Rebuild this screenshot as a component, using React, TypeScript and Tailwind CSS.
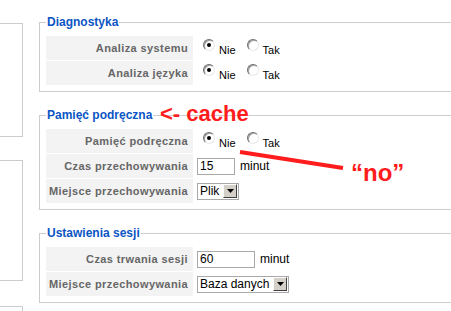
import React from 'react';

type Row = { label: string; kind: 'radio' | 'input' | 'select'; value?: string; inputW?: number };

const Radio: React.FC<{ checked?: boolean }> = ({ checked }) => (
  <span className="relative inline-block w-[12px] h-[12px] rounded-full border border-t-[#6f6f6f] border-l-[#6f6f6f] border-r-[#e8e8e8] border-b-[#e8e8e8] bg-white shadow-[inset_1px_1px_0_#a0a0a0]">
    {checked && <span className="absolute left-[3px] top-[3px] w-[4px] h-[4px] rounded-full bg-black" />}
  </span>
);

const RadioPair: React.FC = () => (
  <div className="flex items-center text-[11px] text-black">
    <span className="ml-[6px] mt-[-2px]"><Radio checked /></span>
    <span className="ml-[4px] mt-[4px]">Nie</span>
    <span className="ml-[11px] mt-[-2px]"><Radio /></span>
    <span className="ml-[4px] mt-[4px]">Tak</span>
  </div>
);

const TextInput: React.FC<{ value: string; w: number }> = ({ value, w }) => (
  <div className="flex items-center text-[12px] text-black">
    <div
      className="h-[17px] border border-[#a9a9a9] bg-white pl-[2px] leading-[15px]"
      style={{ width: w }}
    >
      {value}
    </div>
    <span className="ml-[5px]">minut</span>
  </div>
);

const Select: React.FC<{ value: string }> = ({ value }) => (
  <div className="flex items-center h-[17px] border border-[#a9a9a9] bg-white text-[12px] text-black">
    <span className="pl-[2px] pr-[4px] leading-[15px]">{value}</span>
    <span className="flex items-center justify-center w-[14px] h-[14px] mr-[1px] bg-[#d4d0c8] border border-t-white border-l-white border-r-[#404040] border-b-[#404040]">
      <svg width="7" height="4" viewBox="0 0 7 4">
        <path d="M0 0h7L3.5 4z" fill="#000" />
      </svg>
    </span>
  </div>
);

const Section: React.FC<{ title: string; rows: Row[]; className?: string }> = ({ title, rows, className }) => (
  <fieldset className={`w-[440px] border border-[#cccccc] px-[6px] pt-[7px] pb-[6px] ${className ?? ''}`}>
    <legend className="px-[1px] text-[12px] leading-[14px] font-bold text-[#0b55c4]">{title}</legend>
    <div className="flex flex-col gap-[1px]">
      {rows.map((r) => (
        <div key={r.label} className="flex h-[24px]">
          <div className="w-[147px] shrink-0 bg-[#f3f3f3] flex items-center justify-end pr-[5px] text-[11px] tracking-[0.4px] font-bold text-[#666666]">
            {r.label}
          </div>
          <div className="flex items-center pl-[4px]">
            {r.kind === 'radio' && <RadioPair />}
            {r.kind === 'input' && <TextInput value={r.value ?? ''} w={r.inputW ?? 38} />}
            {r.kind === 'select' && <Select value={r.value ?? ''} />}
          </div>
        </div>
      ))}
    </div>
  </fieldset>
);

const App: React.FC = () => {
  return (
    <div className="relative w-[451px] h-[311px] overflow-hidden bg-white font-['Liberation_Sans',Arial,sans-serif]">
      <div className="flex">
        <div className="w-[23px] shrink-0 flex flex-col">
          <div className="mt-[23px] h-[114px] border-t border-r border-b border-[#cccccc]" />
          <div className="mt-[23px] h-[121px] border-t border-r border-b border-[#cccccc]" />
          <div className="mt-[25px] h-[40px] border-t border-r border-[#cccccc]" />
        </div>
        <div className="ml-[16px] flex flex-col">
          <Section
            className="mt-[15px]"
            title="Diagnostyka"
            rows={[
              { label: 'Analiza systemu', kind: 'radio' },
              { label: 'Analiza języka', kind: 'radio' },
            ]}
          />
          <Section
            className="mt-[16px]"
            title="Pamięć podręczna"
            rows={[
              { label: 'Pamięć podręczna', kind: 'radio' },
              { label: 'Czas przechowywania', kind: 'input', value: '15', inputW: 38 },
              { label: 'Miejsce przechowywania', kind: 'select', value: 'Plik' },
            ]}
          />
          <Section
            className="mt-[16px]"
            title="Ustawienia sesji"
            rows={[
              { label: 'Czas trwania sesji', kind: 'input', value: '60', inputW: 58 },
              { label: 'Miejsce przechowywania', kind: 'select', value: 'Baza danych' },
            ]}
          />
        </div>
      </div>

      {/* annotations */}
      <div className="absolute left-[160px] top-[102px] text-[22px] leading-[24px] font-bold text-[#ff1c1c]">
        &lt;- cache
      </div>
      <svg className="absolute left-0 top-0" width="451" height="311">
        <line x1="240" y1="152" x2="343" y2="168" stroke="#ff1c1c" strokeWidth="4" />
      </svg>
      <div className="absolute left-[351px] top-[160px] text-[24px] leading-[26px] font-bold text-[#ff1c1c]">
        “no”
      </div>
    </div>
  );
};

export default App;
